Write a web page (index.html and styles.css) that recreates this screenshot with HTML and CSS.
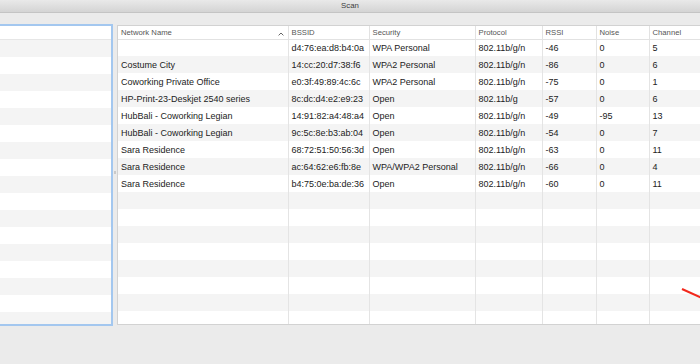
FILE: index.html
```html
<!DOCTYPE html>
<html lang="en">
  <head>
    <meta charset="UTF-8" />
    <meta name="viewport" content="width=device-width, initial-scale=1.0" />
    <title>Scan</title>
    <link rel="stylesheet" href="styles.css">
  </head>
  <body>
    <!-- window title bar -->
    <div class="titlebar">Scan</div>
    <!-- main content: side list + scan table -->
    <div class="content">
      <!-- the focused side list -->
      <div class="side-list">
        <div class="side-head"></div>
        <div class="side-row"></div>
        <div class="side-row"></div>
        <div class="side-row"></div>
        <div class="side-row"></div>
        <div class="side-row"></div>
        <div class="side-row"></div>
        <div class="side-row"></div>
        <div class="side-row"></div>
        <div class="side-row"></div>
        <div class="side-row"></div>
        <div class="side-row"></div>
        <div class="side-row"></div>
        <div class="side-row"></div>
        <div class="side-row"></div>
        <div class="side-row"></div>
        <div class="side-row"></div>
        <div class="side-row"></div>
      </div>
      <!-- split view divider -->
      <div class="splitter"><span class="grip"></span></div>
      <!-- the networks table -->
      <div class="table-wrap">
        <table class="scan-table">
          <colgroup>
            <col class="c-name" />
            <col class="c-bssid" />
            <col class="c-security" />
            <col class="c-protocol" />
            <col class="c-rssi" />
            <col class="c-noise" />
            <col class="c-channel" />
          </colgroup>
          <thead>
            <tr>
              <th>
                Network Name
                <svg class="sort-icon" width="6" height="4" viewBox="0 0 6 4">
                  <path d="M0.6 3.4 L3 1 L5.4 3.4" fill="none" stroke="#555" stroke-width="0.9" />
                </svg>
              </th>
              <th>BSSID</th>
              <th>Security</th>
              <th>Protocol</th>
              <th>RSSI</th>
              <th>Noise</th>
              <th>Channel</th>
            </tr>
          </thead>
          <tbody>
            <tr><td></td><td>d4:76:ea:d8:b4:0a</td><td>WPA Personal</td><td>802.11b/g/n</td><td>-46</td><td>0</td><td>5</td></tr>
            <tr><td>Costume City</td><td>14:cc:20:d7:38:f6</td><td>WPA2 Personal</td><td>802.11b/g/n</td><td>-86</td><td>0</td><td>6</td></tr>
            <tr><td>Coworking Private Office</td><td>e0:3f:49:89:4c:6c</td><td>WPA2 Personal</td><td>802.11b/g/n</td><td>-75</td><td>0</td><td>1</td></tr>
            <tr><td>HP-Print-23-Deskjet 2540 series</td><td>8c:dc:d4:e2:e9:23</td><td>Open</td><td>802.11b/g</td><td>-57</td><td>0</td><td>6</td></tr>
            <tr><td>HubBali - Coworking Legian</td><td>14:91:82:a4:48:a4</td><td>Open</td><td>802.11b/g/n</td><td>-49</td><td>-95</td><td>13</td></tr>
            <tr><td>HubBali - Coworking Legian</td><td>9c:5c:8e:b3:ab:04</td><td>Open</td><td>802.11b/g/n</td><td>-54</td><td>0</td><td>7</td></tr>
            <tr><td>Sara Residence</td><td>68:72:51:50:56:3d</td><td>Open</td><td>802.11b/g/n</td><td>-63</td><td>0</td><td>11</td></tr>
            <tr><td>Sara Residence</td><td>ac:64:62:e6:fb:8e</td><td>WPA/WPA2 Personal</td><td>802.11b/g/n</td><td>-66</td><td>0</td><td>4</td></tr>
            <tr><td>Sara Residence</td><td>b4:75:0e:ba:de:36</td><td>Open</td><td>802.11b/g/n</td><td>-60</td><td>0</td><td>11</td></tr>
            <tr><td></td><td></td><td></td><td></td><td></td><td></td><td></td></tr>
            <tr><td></td><td></td><td></td><td></td><td></td><td></td><td></td></tr>
            <tr><td></td><td></td><td></td><td></td><td></td><td></td><td></td></tr>
            <tr><td></td><td></td><td></td><td></td><td></td><td></td><td></td></tr>
            <tr><td></td><td></td><td></td><td></td><td></td><td></td><td></td></tr>
            <tr><td></td><td></td><td></td><td></td><td></td><td></td><td></td></tr>
            <tr><td></td><td></td><td></td><td></td><td></td><td></td><td></td></tr>
            <tr><td></td><td></td><td></td><td></td><td></td><td></td><td></td></tr>
          </tbody>
        </table>
      </div>
    </div>
    <!-- red annotation stroke drawn over the screenshot -->
    <svg class="annotation" width="22" height="14" viewBox="0 0 22 14">
      <line x1="2" y1="4" x2="22" y2="13" stroke="#f2281c" stroke-width="2" />
    </svg>
  </body>
</html>
```

FILE: styles.css
```css
/* reset */
* {
  margin: 0;
  padding: 0;
  box-sizing: border-box;
}
body {
  width: 700px;
  height: 364px;
  overflow: hidden;
  position: relative;
  background-color: #ebebeb;
  font-family: "Liberation Sans", Arial, sans-serif;
}
/* title bar */
.titlebar {
  height: 13px;
  line-height: 12px;
  text-align: center;
  font-size: 7.8px;
  color: #3c3c3c;
  background: linear-gradient(#e9e9e9, #d4d4d4);
  border-bottom: 1px solid #c4c4c4;
}
/* content area */
.content {
  display: flex;
  align-items: flex-start;
  padding-top: 11px;
}
/* left list with focus ring */
.side-list {
  width: 113px;
  height: 302px;
  overflow: hidden;
  background-color: #fff;
  border: 2px solid #a3c7ef;
  border-left: none;
}
.side-head {
  height: 14px;
  border-bottom: 1px solid #e6e6e6;
}
.side-row {
  height: 17px;
}
.side-row:nth-child(even) {
  background-color: #f4f4f4;
}
/* divider between the two panes */
.splitter {
  width: 4px;
  height: 300px;
  position: relative;
}
.grip {
  position: absolute;
  left: 1px;
  top: 147px;
  width: 2px;
  height: 3px;
  background-color: #c9c9c9;
}
/* table container */
.table-wrap {
  flex: 1;
  height: 300px;
  margin-top: 1px;
  overflow: hidden;
  background-color: #fff;
  border: 1px solid #d2d2d2;
  border-right: none;
}
.scan-table {
  table-layout: fixed;
  border-collapse: collapse;
  width: 700px;
}
.c-name { width: 170px; }
.c-bssid { width: 81px; }
.c-security { width: 106px; }
.c-protocol { width: 67px; }
.c-rssi { width: 54px; }
.c-noise { width: 53px; }
.c-channel { width: 169px; }
/* header cells */
.scan-table th {
  height: 13px;
  padding: 0 3px;
  text-align: left;
  font-weight: normal;
  font-size: 7.7px;
  color: #555;
  white-space: nowrap;
  border-right: 1px solid #e2e2e2;
  border-bottom: 1px solid #e2e2e2;
}
.sort-icon {
  float: right;
  margin-top: 4px;
  margin-right: 1px;
}
/* body cells */
.scan-table td {
  height: 17px;
  padding: 0 3px;
  font-size: 9px;
  color: #222;
  white-space: nowrap;
  overflow: hidden;
  border-right: 1px solid #e4e4e4;
}
.scan-table tbody tr:nth-child(even) {
  background-color: #f4f4f4;
}
/* red annotation mark */
.annotation {
  position: absolute;
  left: 680px;
  top: 285px;
}
```
